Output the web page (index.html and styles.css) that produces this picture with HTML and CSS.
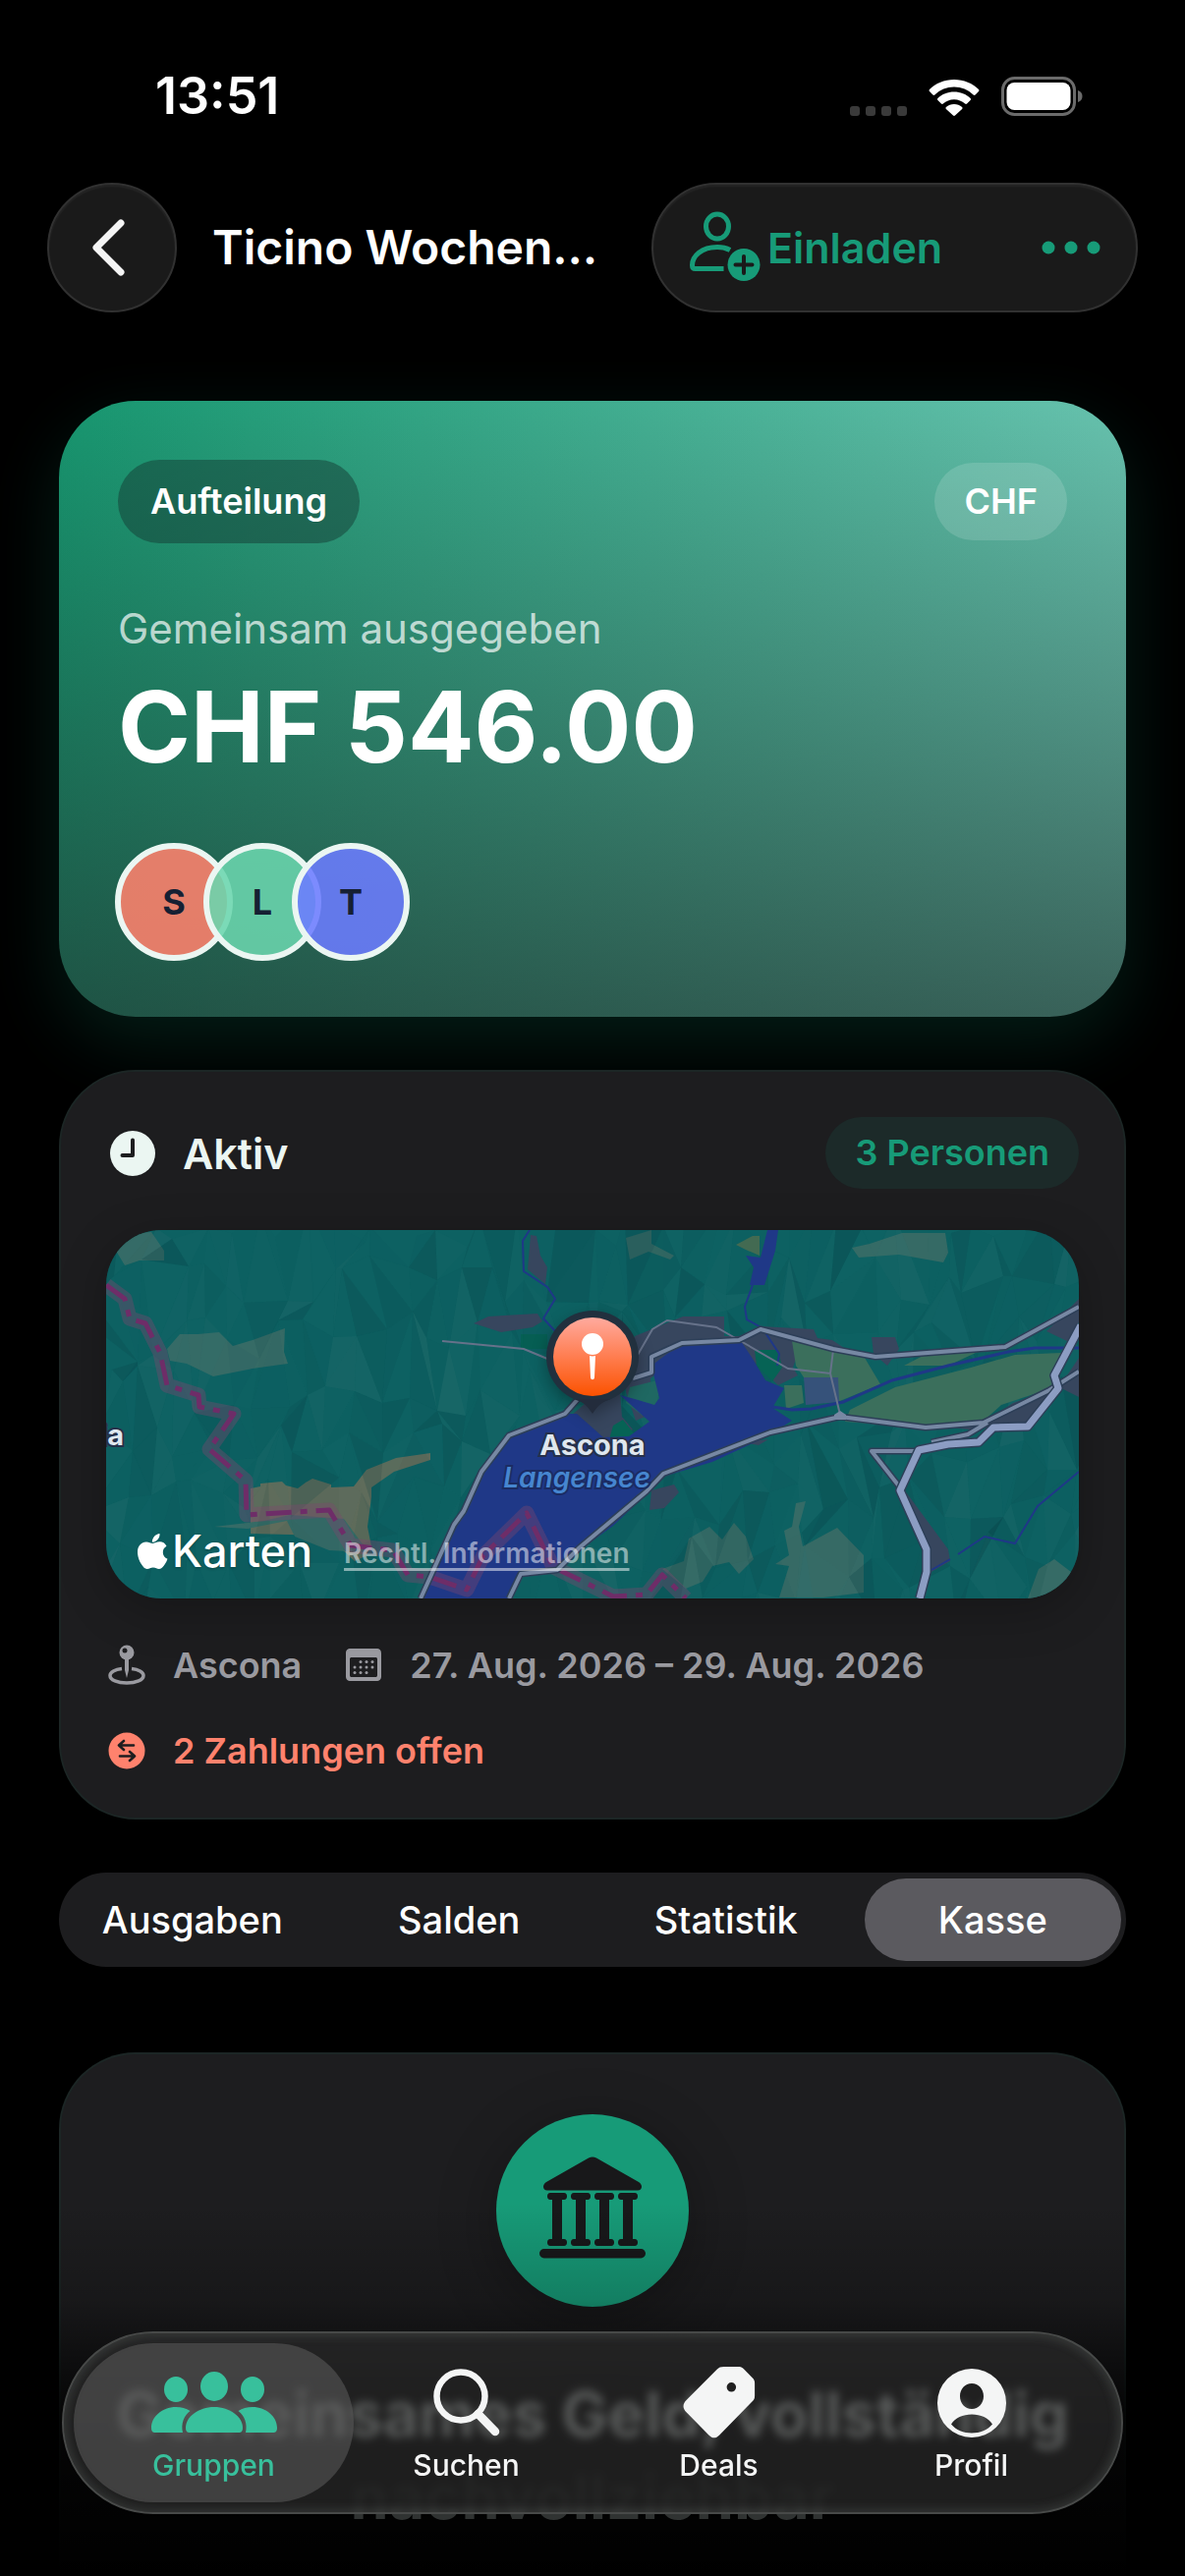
FILE: index.html
```html
<!DOCTYPE html>
<html lang="de">
  <head>
    <meta charset="UTF-8" />
    <meta name="viewport" content="width=device-width, initial-scale=1.0" />
    <title>Ticino Wochenende</title>
    <link rel="stylesheet" href="styles.css">
  </head>
  <body>
    <div class="status">
      <span class="status-time">13:51</span>
      <div class="status-icons">
        <svg width="58" height="10" viewBox="0 0 58 10" fill="#3a3a3a" aria-hidden="true"><rect width="10" height="10" rx="3"/><rect x="16" width="10" height="10" rx="3"/><rect x="32" width="10" height="10" rx="3"/><rect x="48" width="10" height="10" rx="3"/></svg>
        <svg class="wifi" width="52" height="38" viewBox="0 0 52 38" fill="#fff" aria-hidden="true">
          <path d="M26 1C36 1 44.500 4.800 51 11c.6.6.6 1.500 0 2.100l-3.400 3.400c-.6.6-1.400.6-2 0C40.300 11.500 33.500 8.600 26 8.600S11.700 11.500 6.400 16.500c-.6.6-1.400.6-2 0L1 13.100c-.6-.6-.6-1.500 0-2.100C7.500 4.800 16 1 26 1z"/>
          <path d="M26 13.500c6.400 0 12.200 2.400 16.600 6.400.6.6.6 1.500 0 2.100l-3.500 3.500c-.6.6-1.400.6-2 0-3-2.700-6.900-4.300-11.100-4.300s-8.100 1.600-11.100 4.300c-.6.6-1.400.6-2 0L9.400 22c-.6-.6-.6-1.500 0-2.100C13.800 15.900 19.600 13.500 26 13.500z"/>
          <path d="M26 26c3.100 0 5.900 1.100 8.100 3 .6.6.6 1.400 0 2l-7.100 6.500c-.6.600-1.400.600-2 0L17.900 31c-.6-.6-.6-1.400 0-2 2.200-1.900 5-3 8.100-3z"/>
        </svg>
        <svg width="83" height="40" viewBox="0 0 83 40" aria-hidden="true">
          <rect x="1.500" y="1.500" width="73" height="37" rx="12" fill="none" stroke="#6b6b6b" stroke-width="3"/>
          <rect x="5.500" y="6" width="65" height="28" rx="8" fill="#fff"/>
          <path d="M78 14c3 1 4.500 3.200 4.500 6S81 25 78 26z" fill="#6b6b6b"/>
        </svg>
      </div>
    </div>

    <header class="nav">
      <button class="glass back" aria-label="Zurück">
        <svg width="36" height="60" viewBox="0 0 36 60" aria-hidden="true"><path d="M31 5 6 30l25 25" fill="none" stroke="#f4f4f4" stroke-width="7" stroke-linecap="round" stroke-linejoin="round"/></svg>
      </button>
      <h1 class="nav-title">Ticino Wochen…</h1>
      <div class="glass nav-actions">
        <button class="invite">
          <svg width="74" height="74" viewBox="0 0 74 74" fill="none" stroke="#179b78" stroke-width="5" aria-hidden="true">
            <ellipse cx="29" cy="15.500" rx="11.500" ry="12.500"/>
            <path d="M42 39.500C38 37.300 33.500 36.500 29 36.500 13 36.500 3.500 45.500 3.500 55c0 2 1 3.500 3 3.500h29" />
            <circle cx="56" cy="54.500" r="16.500" fill="#179b78" stroke="none"/>
            <path d="M56 46v17M47.500 54.500h17" stroke="#1a1a1a" stroke-width="4" stroke-linecap="round"/>
          </svg>
          <span>Einladen</span>
        </button>
        <button class="more" aria-label="Mehr">
          <svg width="60" height="14" viewBox="0 0 60 14" fill="#179b78" aria-hidden="true"><circle cx="7" cy="7" r="6.500"/><circle cx="30" cy="7" r="6.500"/><circle cx="53" cy="7" r="6.500"/></svg>
        </button>
      </div>
    </header>

    <main class="content">
      <!-- Summe -->
      <section class="hero">
        <div class="hero-top">
          <span class="pill pill-dark">Aufteilung</span>
          <span class="pill pill-light">CHF</span>
        </div>
        <p class="hero-label">Gemeinsam ausgegeben</p>
        <p class="hero-amount">CHF 546.00</p>
        <div class="avatars">
          <span class="avatar avatar-s">S</span>
          <span class="avatar avatar-l">L</span>
          <span class="avatar avatar-t">T</span>
        </div>
      </section>

      <!-- Reise -->
      <section class="card trip">
        <div class="trip-head">
          <svg width="46" height="46" viewBox="0 0 46 46" aria-hidden="true"><circle cx="23" cy="23" r="23" fill="#ebf6f2"/><path d="M23 9.500v15.500H12.500" fill="none" stroke="#1d1d1f" stroke-width="4" stroke-linecap="round" stroke-linejoin="round"/></svg>
          <h2 class="trip-state">Aktiv</h2>
          <span class="people">3 Personen</span>
        </div>

        <div class="map">
          <svg class="map-canvas" viewBox="0 0 990 375" preserveAspectRatio="xMidYMid slice" role="img" aria-label="Karte von Ascona">
            <defs>
              <linearGradient id="pin" x1="0" y1="0" x2="0" y2="1"><stop offset="0" stop-color="#ffaa9e"/><stop offset=".5" stop-color="#ff7d50"/><stop offset="1" stop-color="#fb5200"/></linearGradient>
            </defs>
            <rect width="990" height="375" fill="#0d6162"/>

            <!-- open ground -->
            <path fill="#5f6c5b" d="M147 263l10-2 0-3 22-2 4 4 12 3 8-6 7-4 19 6v3l23-1 13-17 30-12 35-5v7l-37 12-23 16v10l-4 30 4 20-6 10-11 5-28-26-78-2z"/>
            <g fill="#366b66">
              <path d="M62 121l13-15h18l22-2 14 14 20-6 33-12-1 24 4 12-36 5-40 8-27-13-17-3z"/>
              <path d="M10 21 30 3 46 2l13 19v10H34l-15 5zM110 302l50-6 27-6 55 4 25 34-40-2-35-14-8-16-40 8z"/>
              <path d="M566 345l22-8 5-23 21-12 13 13 12-17 12 14 8 23-15 15-10-12-17 4-10 16-17 7zM681 340l14-9-5-25 8-4 4-24 10-2-7 26 4 20 35-19 27 28v38l-41 5h-45l10-32z"/>
              <path d="M759 18l18-4 33-11h44l3 20-5 10-45-8-41 3zM529 8l26-8v14l23 12-4 4-22-8-19 8zM949 345l16-10 17 13-13 27h-31z"/>
            </g>
            <path d="M641 15l17-9h7v20l-14-6z" fill="#436b52"/>
            <path d="M422 106h27v15h-27z" fill="#066355"/>

            <g id="relief"></g>

            <!-- towns -->
            <g fill="#37465e">
              <path d="M432 5l6 1 4 20 7 12-2 17-18-15zM374 95l15-7 50-3 5 8-10 6-32 5z"/>
              <path d="M529 165l1-40 8-17 49-20h42v20h17l20-10 54 3 4 9 15 2 24 16-58-6-6 18 5 8-20 10-20-19-12-13-71 4-27 21 2 36-17 7z"/>
              <path d="M472 190l23-20 28-4 2 24 11 13-16 12-16-4zM779 109h24l4 12-12 17-14-12zM843 195l6-12 20-4 26 7-7 18-30-3zM893 196l30-20 38-13 10-1-30 40-46-1zM957 103l33-33v24l-10 20zM970 160l20-30v40zM555 265l23-6 5 8-15 16-15 2zM648 216l26-3-10 6zM364 286l7-11 15 0-9 27-20 40-6 1 5-30z"/>
              <path d="M815 268l42 57 2 12-21 12-3-24-24-50z"/>
            </g>

            <!-- valley -->
            <g fill="#3b6f5c">
              <path d="M698 113l41 10 33 7 16 27-46 19-4-26h-28l-8-12zM757 183l46-23 77-20 45-13 47-2-7 14-3 22-51 17-20 18-61 5-78-6zM812 138l23-12 40-6 12 4-30 14zM690 158h18l2 18-18 6z"/>
            </g>
            <path d="M710 150h35l1 25-34 3z" fill="#36527a"/>
            <path d="M660 122h24l4 18-10 14-16-16zM516 199l10-6 12 15-8 7-18-2z" fill="#066355"/>
            <path d="M533 160l32-8-5 28-7 14-24-18z" fill="#1f6862"/>

            <!-- water -->
            <path fill="#1f3887" d="M320 375l34-75 16-30 12-24 28-37 57-22 12 0 27 24 26-1 21-15-30-27 15 4 20 6 5-7-8-33 32-24 57-4 14 21 13 22 19 8-12 20 20 13-27 17-54 25-50 15-17 18-34 32-34 25-23 23-37 4-12 25z"/>
            <path fill="#1f3887" d="M673 0h11l-3 21-11 35h-15l4-18-8-12 15 2z"/>
            <path d="M678 180l20 3 20-1 32-7 50-22 57-15 61-14 27-4h45" fill="none" stroke="#1f3887" stroke-width="3"/>
            <path d="M990 246l-42 35-23 38-31-7-27 18M859 335l-19 11M658 56l-8 22 2 13 16 9 17 26-2 12M431 0l-7 11 1 31 24 16 8 12-12 20 12 13" fill="none" stroke="#1f3887" stroke-width="2"/>

            <!-- border -->
            <g fill="none" stroke-linejoin="round">
              <path d="M0 56l19 14 5 20 16 5 15 30 7 33 32 10 1 12 35 7-25 36 37 32 1 35 84-5 22 36 43 5 15 25 22 2 38 13 17-35 44-43 27 55 47 23 14 7 34-2 16-20 24 24" stroke="rgba(127,70,110,.38)" stroke-width="15"/>
              <path d="M0 56l19 14 5 20 16 5 15 30 7 33 32 10 1 12 35 7-25 36 37 32 1 35 84-5 22 36 43 5 15 25 22 2 38 13 17-35 44-43 27 55 47 23 14 7 34-2 16-20 24 24" stroke="#6e2d68" stroke-width="5" stroke-dasharray="26 9 7 9"/>
            </g>

            <!-- roads -->
            <path d="M342 113l83 8 24 10M541 127l15-26 15-9 50 7 23 13 50 29 43 5 3-24M737 146l10 42" fill="none" stroke="#66728a" stroke-width="2"/>
            <g fill="none" stroke-linejoin="round">
              <path d="M482 170l-15 17-57 22-28 37-18 40-10 14-34 75M482 323l68-57 17-18 109-42 71-16 87 11 59-5 67-33 30-19M482 323l-23 23-37 4-12 25M536 151l19-6v-16l31-14 58-3 22-11 74 20 43 8 132-10 75-41M823 225h-44l29 37M840 216l37-8 20-12" stroke="#2d3f58" stroke-width="7"/>
              <path d="M482 170l-15 17-57 22-28 37-18 40-10 14-34 75M482 323l68-57 17-18 109-42 71-16 87 11 59-5 67-33 30-19M482 323l-23 23-37 4-12 25M536 151l19-6v-16l31-14 58-3 22-11 74 20 43 8 132-10 75-41M823 225h-44l29 37M840 216l37-8 20-12" stroke="#7788a3" stroke-width="4"/>
              <path d="M741 193v-5l6-4 6 4v5z" fill="#7788a3"/>
              <path d="M992 97l-27 51 4 13-31 39-35 1-15 15-31 2-30 6-19 41 27 60v23l-7 27" stroke="#2d3f58" stroke-width="10"/>
              <path d="M992 97l-27 51 4 13-31 39-35 1-15 15-31 2-30 6-19 41 27 60v23l-7 27" stroke="#8c9dc3" stroke-width="7"/>
            </g>

            <g class="map-label">
              <text x="18" y="219" text-anchor="end">ia</text>
              <text x="495" y="229" text-anchor="middle">Ascona</text>
            </g>
            <text class="map-lake" x="479" y="262" text-anchor="middle">Langensee</text>

            <!-- pin -->
            <g class="map-pin">
              <circle cx="495" cy="129" r="47" fill="#21303e"/>
              <path d="M477 172c8 3 12 6 18 15 6-9 10-12 18-15z" fill="#232c3c"/>
              <circle cx="495" cy="129" r="40" fill="url(#pin)"/>
              <circle cx="495" cy="116" r="11" fill="#fff"/>
              <path d="M492 128c2 .6 4 .6 6 0l-1 22c-.2 3-3.800 3-4 0z" fill="#fff"/>
            </g>
          </svg>
          <div class="map-credit">
            <span class="map-brand">
              <svg width="31" height="37" viewBox="0 0 31 37" fill="#fff" aria-hidden="true">
                <path d="M22.500 0c.3 2.300-.6 4.500-2 6.100-1.400 1.700-3.500 2.800-5.600 2.700-.3-2.200.8-4.500 2-5.900C18.300 1.300 20.600.1 22.500 0z"/>
                <path d="M29.500 12.700c-2.300 1.400-3.700 3.500-3.700 6.300 0 3.200 1.900 5.600 4.700 6.700-.6 1.900-1.500 3.700-2.600 5.400-1.600 2.400-3.200 4.900-5.800 4.900-2.500.1-3.300-1.500-6.200-1.500-2.800 0-3.700 1.500-6.100 1.600-2.500.1-4.400-2.600-6-5C.6 26.400-1.900 17.500 1.800 12.300c1.600-2.500 4.200-3.900 7-3.900 2.700-.1 4.600 1.500 6.800 1.500 2.100 0 4.200-1.800 7.300-1.600 2.500.1 5.100 1.400 6.600 4.400z"/>
              </svg>
              Karten
            </span>
            <a class="map-legal" href="#">Rechtl. Informationen</a>
          </div>
        </div>

        <div class="facts">
          <span class="fact">
            <svg width="38" height="42" viewBox="0 0 38 42" aria-hidden="true">
              <path d="M14 24.500C7 25.300 2 28 2 31.500 2 36 9.500 39 19 39s17-3 17-7.500c0-3.500-5-6.200-12-7" fill="none" stroke="#9a9aa0" stroke-width="3.500"/>
              <circle cx="19" cy="8" r="7.500" fill="#9a9aa0"/><circle cx="17" cy="6" r="2.500" fill="#1d1d1f"/>
              <path d="M17 14h4v12l-2 8-2-8z" fill="#9a9aa0"/>
            </svg>
            Ascona
          </span>
          <span class="fact">
            <svg width="38" height="34" viewBox="0 0 38 34" fill="#9a9aa0" aria-hidden="true">
              <path fill-rule="evenodd" d="M6 0h26c3.500 0 5 1.500 5 5v23c0 3.500-1.500 5-5 5H6c-3.500 0-5-1.500-5-5V5c0-3.500 1.500-5 5-5zM7 9c-1.400 0-2 .6-2 2v16c0 1.400.6 2 2 2h24c1.400 0 2-.6 2-2V11c0-1.400-.6-2-2-2z"/>
              <circle cx="16" cy="13.500" r="1.500"/><circle cx="22" cy="13.500" r="1.500"/><circle cx="28" cy="13.500" r="1.500"/><circle cx="10" cy="19" r="1.500"/><circle cx="16" cy="19" r="1.500"/><circle cx="22" cy="19" r="1.500"/><circle cx="28" cy="19" r="1.500"/><circle cx="10" cy="24.500" r="1.500"/><circle cx="16" cy="24.500" r="1.500"/><circle cx="22" cy="24.500" r="1.500"/>
            </svg>
            27. Aug. 2026 – 29. Aug. 2026
          </span>
        </div>
        <p class="fact fact-open">
          <svg width="38" height="38" viewBox="0 0 38 38" aria-hidden="true">
            <circle cx="19" cy="19" r="18.500" fill="#ff826d"/>
            <path d="M26 13.500H11.500M16 9l-5 4.500 5 4.500M12 24.500h14.500M22 20l5 4.500-5 4.500" fill="none" stroke="#1d1d1f" stroke-width="2.600" stroke-linecap="round" stroke-linejoin="round"/>
          </svg>
          2 Zahlungen offen
        </p>
      </section>

      <div class="segments" role="tablist">
        <button class="segment" role="tab">Ausgaben</button>
        <button class="segment" role="tab">Salden</button>
        <button class="segment" role="tab">Statistik</button>
        <button class="segment is-active" role="tab" aria-selected="true">Kasse</button>
      </div>

      <!-- Kasse -->
      <section class="card fund">
        <div class="fund-icon">
          <svg width="108" height="104" viewBox="0 0 108 104" fill="#18181a" aria-hidden="true">
            <path d="M50 1.500c2.500-1.500 5.500-1.500 8 0l43 24.500c2 1.300 3 2.800 3 4.800 0 2.200-1.500 3.700-4 3.700H8c-2.500 0-4-1.500-4-3.700 0-2 1-3.500 3-4.800z"/>
            <path id="column" d="M11 37h14c2 0 3 1.200 3 3.500S27 44 25 44h-2v40h2c2 0 3 1.200 3 3.500S27 91 25 91H11c-2 0-3-1.200-3-3.500S9 84 11 84h2V44h-2c-2 0-3-1.200-3-3.500S9 37 11 37z"/>
            <use href="#column" x="24"/><use href="#column" x="48"/><use href="#column" x="72"/>
            <rect y="94" width="108" height="9.500" rx="4.700"/>
          </svg>
        </div>
        <h2 class="fund-title">Gemeinsames Geld, vollständig nachvollziehbar</h2>
      </section>
    </main>

    <div class="fade"></div>

    <nav class="tabbar">
      <a class="tab is-active" href="#">
        <svg width="130" height="72" viewBox="0 0 130 72" fill="currentColor" aria-hidden="true">
          <ellipse cx="65" cy="19" rx="14" ry="15"/><ellipse cx="26" cy="22" rx="12" ry="13"/><ellipse cx="104" cy="22" rx="12" ry="13"/>
          <path d="M65 40c16 0 29 10 29 21 0 4-1.500 5-4 5H40c-2.500 0-4-1-4-5 0-11 13-21 29-21z"/>
          <path d="M26 40c5.500 0 10.500 1.500 14.500 4C34 49 31 57 33 66H5c-2.500 0-4-1-4-5 0-11 11-21 25-21zM104 40c-5.500 0-10.500 1.500-14.500 4C96 49 99 57 97 66h28c2.500 0 4-1 4-5 0-11-11-21-25-21z"/>
        </svg>
        <span>Gruppen</span>
      </a>
      <a class="tab" href="#">
        <svg width="72" height="72" viewBox="0 0 72 72" fill="none" stroke="currentColor" aria-hidden="true"><circle cx="30" cy="29" r="24.500" stroke-width="6.500"/><path d="M47.500 47 65 65" stroke-width="8.500" stroke-linecap="round"/></svg>
        <span>Suchen</span>
      </a>
      <a class="tab" href="#">
        <svg width="80" height="80" viewBox="0 0 80 80" fill="currentColor" aria-hidden="true"><path fill-rule="evenodd" d="M45 1h15c3 0 4.500.6 6.500 2.600L75.500 13c2 2 2.500 3.500 2.500 6v13c0 3-.8 4.500-2.800 6.500L40 74.500c-3.500 3.600-7.500 3.600-11 0L5 50c-4.500-4.500-4.500-9 0-13.500L37.500 4C39.800 1.700 41.500 1 45 1zM53 18a5 5 0 1 0 .01 10A5 5 0 1 0 53 18z"/></svg>
        <span>Deals</span>
      </a>
      <a class="tab" href="#">
        <svg width="72" height="72" viewBox="0 0 72 72" fill="currentColor" aria-hidden="true"><path fill-rule="evenodd" d="M36 1a35 35 0 1 0 .01 70A35 35 0 1 0 36 1zM36 16c7 0 12 5.800 12 13s-5 13-12 13-12-5.800-12-13 5-13 12-13zM15 57.500C19 51 27 47.500 36 47.500S53 51 57 57.500C52 63.500 44.500 66.500 36 66.500S20 63.500 15 57.500z"/></svg>
        <span>Profil</span>
      </a>
    </nav>

    <script>
      // shaded slopes of the map: a jittered triangle grid with a fixed seed
      let seed = 7;
      const rnd = () => (seed = (seed * 16807) % 2147483647) / 2147483647;
      const cols = 40, rows = 8, pts = [];
      for (let r = 0; r <= rows; r++) {
        pts.push([]);
        for (let c = 0; c <= cols; c++) pts[r].push([c * 26 - 20 + rnd() * 26, r * 56 - 30 + rnd() * 52]);
      }
      let out = '';
      const tri = (...p) => {
        const fill = rnd() > .45 ? '#083f45' : '#2d6f70';
        out += `<path d="M${p.map(q => q.map(Math.round).join(' ')).join('L')}z" fill="${fill}" opacity="${(rnd() * rnd() * .34).toFixed(2)}"/>`;
      };
      for (let r = 0; r < rows; r++) for (let c = 0; c < cols; c++) {
        const a = pts[r][c], b = pts[r][c + 1], d = pts[r + 1][c], e = pts[r + 1][c + 1];
        if (rnd() > .5) { tri(a, b, d); tri(b, d, e); } else { tri(a, b, e); tri(a, d, e); }
      }
      document.getElementById('relief').innerHTML = out;
    </script>
  </body>
</html>
```
FILE: styles.css
```css
/* ---------- Base ---------- */
*{box-sizing:border-box;margin:0;padding:0;}
body{position:relative;display:flex;flex-direction:column;min-height:100vh;background:#000;color:#fff;font-family:Inter,"Liberation Sans",sans-serif;}
button{border:0;background:none;color:inherit;font:inherit;cursor:pointer;}
a{color:inherit;text-decoration:none;}
svg{display:block;flex:none;}

/* ---------- Status bar ---------- */
.status{display:flex;align-items:center;justify-content:space-between;padding:68px 104px 58px 158px;}
.status-time{font-size:52px;line-height:60px;font-weight:600;}
.status-icons{display:flex;align-items:flex-end;gap:22px;}

/* ---------- Navigation ---------- */
.nav{display:flex;align-items:center;padding:0 48px;}
.glass{background:#1a1a1a;border:2px solid #313131;border-radius:66px;box-shadow:inset 0 2px 2px rgba(255,255,255,.05);}
.back{display:flex;align-items:center;justify-content:center;width:132px;height:132px;padding-right:8px;}
.nav-title{flex:1;padding-left:36px;font-size:48px;line-height:60px;font-weight:600;white-space:nowrap;}
.nav-actions{display:flex;align-items:center;justify-content:space-between;width:495px;height:132px;padding:0 36px;color:#179b78;}
.invite{display:flex;align-items:center;gap:6px;font-size:43px;font-weight:600;}

/* ---------- Content ---------- */
.content{flex:1;display:flex;flex-direction:column;gap:54px;padding:90px 60px 0;}

/* ---------- Hero ---------- */
.hero{padding:60px 60px 57px;border-radius:78px;background:linear-gradient(180deg,rgba(34,48,46,0) 0%,rgba(34,48,46,.66) 100%),linear-gradient(90deg,#17966f 0%,#67c2ae 100%);box-shadow:0 24px 72px rgba(20,150,115,.2);}
.hero-top{display:flex;align-items:center;justify-content:space-between;}
.pill{border-radius:43px;font-size:36px;font-weight:600;}
.pill-dark{padding:0 33px;line-height:85px;background:rgba(20,60,52,.5);}
.pill-light{padding:0 30px;line-height:79px;background:rgba(255,255,255,.14);}
.hero-label{margin-top:61px;font-size:42px;line-height:52px;color:rgba(255,255,255,.7);}
.hero-amount{margin-top:14px;font-size:100px;line-height:120px;font-weight:700;}
.avatars{display:flex;margin-top:58px;margin-left:-3px;}
.avatar{width:120px;height:120px;border:6px solid #ebf6f2;border-radius:50%;font-size:36px;line-height:108px;font-weight:700;text-align:center;color:#162033;}
.avatar + .avatar{margin-left:-30px;}
.avatar-s{background:rgba(255,130,109,.88);}
.avatar-l{background:rgba(107,214,174,.88);}
.avatar-t{background:rgba(108,124,255,.88);}

/* ---------- Cards ---------- */
.card{border:2px solid #1c2625;border-radius:78px;background:#1d1d1f;}
.trip{padding:46px;}
.trip-head{display:flex;align-items:center;gap:28px;padding-left:4px;}
.trip-state{flex:1;font-size:43px;line-height:52px;font-weight:600;color:#ebf6f2;}
.people{padding:0 30px;border-radius:37px;background:#1c2a29;color:#179b78;font-size:36px;line-height:73px;font-weight:600;}

/* ---------- Map ---------- */
.map{position:relative;height:375px;margin-top:42px;border-radius:56px;overflow:hidden;box-shadow:0 12px 48px rgba(0,0,0,.25);}
.map-canvas{width:100%;height:100%;}
.map-label{fill:#dfe7ee;stroke:#26304a;stroke-width:4px;paint-order:stroke;font-size:29px;font-weight:700;}
.map-lake{fill:#4686d0;stroke:#1b2c63;stroke-width:4px;paint-order:stroke;font-size:28px;font-style:italic;font-weight:600;}
.map-pin{filter:drop-shadow(0 6px 8px rgba(0,0,0,.3));}
.map-credit{position:absolute;left:32px;bottom:20px;display:flex;align-items:center;gap:32px;}
.map-brand{display:flex;align-items:center;gap:4px;font-size:45px;line-height:56px;font-weight:500;text-shadow:0 1px 3px rgba(0,0,0,.3);}
.map-legal{margin-top:4px;font-size:28px;line-height:36px;font-weight:600;color:rgba(255,255,255,.5);text-decoration:underline;text-decoration-thickness:3px;text-underline-offset:5px;text-decoration-skip-ink:none;}

/* ---------- Facts ---------- */
.facts{display:flex;gap:42px;margin-top:46px;}
.fact{display:flex;align-items:center;gap:28px;padding-left:2px;font-size:36px;line-height:44px;font-weight:600;color:#9a9aa0;}
.fact-open{margin-top:43px;color:#ff826d;}

/* ---------- Segments ---------- */
.segments{display:grid;grid-template-columns:repeat(4,1fr);height:96px;border-radius:48px;background:#1d1d1f;}
.segment{margin:6px 5px;border-radius:42px;font-size:38px;font-weight:500;}
.segment.is-active{background:#5b5a5f;}

/* ---------- Fund ---------- */
.fund{flex:1;display:flex;flex-direction:column;align-items:center;margin-top:33px;padding:61px 40px 0;border-bottom:0;border-radius:78px 78px 0 0;}
.fund-icon{display:flex;align-items:center;justify-content:center;width:196px;height:196px;padding-bottom:6px;border-radius:50%;background:#179b78;box-shadow:0 12px 60px rgba(0,0,0,.3);}
.fund-title{position:relative;z-index:1;max-width:1000px;margin-top:67px;font-size:63px;line-height:84px;font-weight:700;text-align:center;color:transparent;background:linear-gradient(180deg,#a2a8a6 50%,#141615 50%,#141615 84%,#303332 85%);background-clip:text;}

/* ---------- Tab bar ---------- */
.fade{position:absolute;left:0;right:0;bottom:0;height:380px;background:linear-gradient(180deg,rgba(0,0,0,0) 0%,rgba(0,0,0,.18) 26%,rgba(0,0,0,.4) 36%,rgba(0,0,0,.8) 56%,rgba(0,0,0,.92) 82%,#000 100%);}
.tabbar{position:absolute;z-index:2;left:63px;right:63px;bottom:63px;display:grid;grid-template-columns:repeat(4,1fr);height:186px;padding:10px 24px;border:2px solid #474948;border-radius:93px;background:rgba(46,46,46,.64);backdrop-filter:blur(5px);box-shadow:inset 0 0 8px 4px rgba(120,128,124,.22);}
.tab{display:flex;flex-direction:column;align-items:center;justify-content:space-between;margin:0 -14px;padding:23px 0 20px;border-radius:81px;color:#f4f5f5;font-size:30px;line-height:36px;font-weight:500;}
.tab svg{height:76px;}
.tab.is-active{background:rgba(92,92,92,.55);color:#38c09c;}
```
